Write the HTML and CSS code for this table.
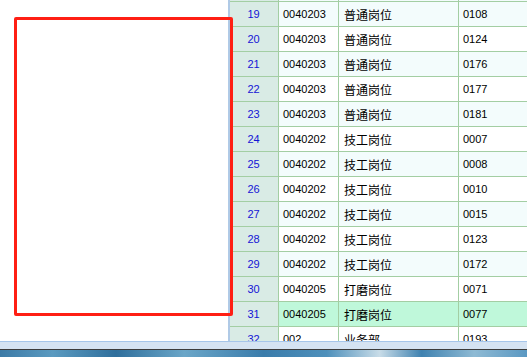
FILE: index.html
```html
<!DOCTYPE html>
<html>
<head>
<meta charset="utf-8">
<link rel="stylesheet" href="styles.css">
</head>
<body>
<div class="screen">
  <div class="main">
    <div class="left-panel"></div>
    <div class="splitter"></div>
    <div class="grid-wrap">
      <div class="grid">
        <div class="row odd"><div class="c num"></div><div class="c code"></div><div class="c name"></div><div class="c no"></div></div>
        <div class="row odd"><div class="c num">19</div><div class="c code">0040203</div><div class="c name">普通岗位</div><div class="c no">0108</div></div>
        <div class="row"><div class="c num">20</div><div class="c code">0040203</div><div class="c name">普通岗位</div><div class="c no">0124</div></div>
        <div class="row odd"><div class="c num">21</div><div class="c code">0040203</div><div class="c name">普通岗位</div><div class="c no">0176</div></div>
        <div class="row"><div class="c num">22</div><div class="c code">0040203</div><div class="c name">普通岗位</div><div class="c no">0177</div></div>
        <div class="row odd"><div class="c num">23</div><div class="c code">0040203</div><div class="c name">普通岗位</div><div class="c no">0181</div></div>
        <div class="row"><div class="c num">24</div><div class="c code">0040202</div><div class="c name">技工岗位</div><div class="c no">0007</div></div>
        <div class="row odd"><div class="c num">25</div><div class="c code">0040202</div><div class="c name">技工岗位</div><div class="c no">0008</div></div>
        <div class="row"><div class="c num">26</div><div class="c code">0040202</div><div class="c name">技工岗位</div><div class="c no">0010</div></div>
        <div class="row odd"><div class="c num">27</div><div class="c code">0040202</div><div class="c name">技工岗位</div><div class="c no">0015</div></div>
        <div class="row"><div class="c num">28</div><div class="c code">0040202</div><div class="c name">技工岗位</div><div class="c no">0123</div></div>
        <div class="row odd"><div class="c num">29</div><div class="c code">0040202</div><div class="c name">技工岗位</div><div class="c no">0172</div></div>
        <div class="row"><div class="c num">30</div><div class="c code">0040205</div><div class="c name">打磨岗位</div><div class="c no">0071</div></div>
        <div class="row selected"><div class="c num">31</div><div class="c code">0040205</div><div class="c name">打磨岗位</div><div class="c no">0077</div></div>
        <div class="row"><div class="c num">32</div><div class="c code">002</div><div class="c name">业务部</div><div class="c no">0193</div></div>
      </div>
    </div>
  </div>
  <div class="statusbar"></div>
  <div class="taskbar"></div>
  <div class="highlight-box"></div>
</div>
</body>
</html>
```

FILE: styles.css
```css
html, body {
  margin: 0;
  padding: 0;
  background: #ffffff;
}

.screen {
  position: relative;
  width: 527px;
  height: 357px;
  overflow: hidden;
  display: flex;
  flex-direction: column;
  font-family: "Liberation Sans", Arial, "Noto Sans CJK SC", sans-serif;
  font-size: 11px;
  color: #000;
}

.main {
  height: 341px;
  display: flex;
  flex-direction: row;
  overflow: hidden;
}

.left-panel {
  width: 228px;
  background: #ffffff;
}

.splitter {
  width: 2px;
  background: #b0cae6;
}

.grid-wrap {
  flex: 1;
  overflow: hidden;
}

.grid {
  margin-top: -23px;
  width: 320px;
}

.row {
  display: flex;
  height: 25px;
  box-sizing: border-box;
  border-bottom: 1px solid #a3cea3;
  background: #ffffff;
}

.row.odd {
  background: #f3fcfc;
}

.row.selected {
  background: #bff8da;
}

.c {
  box-sizing: border-box;
  border-right: 1px solid #a3cea3;
  display: flex;
  align-items: center;
  padding-left: 4px;
  white-space: nowrap;
}

.num {
  width: 49px;
  justify-content: center;
  padding-left: 0;
  padding-right: 1px;
  background: #d9ebe5;
  color: #1414d6;
}

.code {
  width: 60px;
}

.name {
  width: 120px;
  padding-left: 5px;
  font-family: "Noto Sans CJK SC", sans-serif;
  font-size: 12px;
}

.no {
  flex: 1;
  border-right: none;
}

.statusbar {
  height: 8px;
  box-sizing: border-box;
  background: #d5e3f2;
  border-top: 1px solid #a6c6ea;
}

.taskbar {
  height: 8px;
  box-sizing: border-box;
  border-top: 1px solid #3c3c3c;
  background: linear-gradient(90deg, #3c7aa6 0%, #5a9ac0 10%, #2f6f9c 22%, #6aa6c8 35%, #3a7cab 50%, #4e90bb 62%, #c8dce8 72%, #3f82b0 80%, #8ebad4 90%, #5a98c2 100%);
}

.highlight-box {
  position: absolute;
  left: 14px;
  top: 17px;
  width: 219px;
  height: 299px;
  box-sizing: border-box;
  border: 3px solid #ff1f14;
  border-radius: 2px;
}
```
